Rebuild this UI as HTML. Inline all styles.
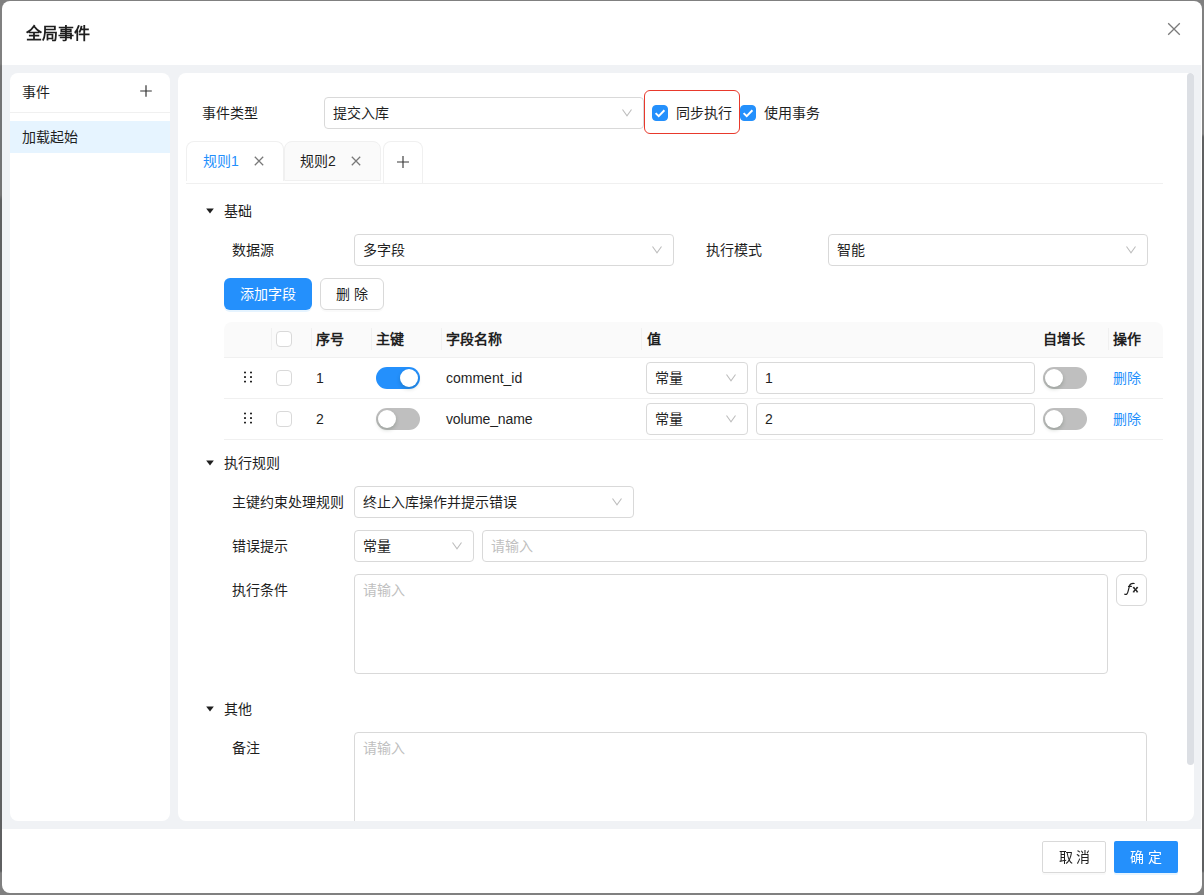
<!DOCTYPE html>
<html lang="zh-CN">
<head>
<meta charset="utf-8">
<title>全局事件</title>
<style>
*{box-sizing:border-box;margin:0;padding:0}
html,body{width:1204px;height:895px;overflow:hidden}
body{position:relative;background:#808080;font-family:"Liberation Sans",sans-serif;font-size:14px;color:#1f1f1f;line-height:22px}
.abs{position:absolute}
.t{position:absolute;white-space:nowrap;height:22px;line-height:22px}
.b{font-weight:700}
/* backdrop details */
#edgeL{left:0;top:0;width:2px;height:895px;background:linear-gradient(#808080 0,#808080 64px,#747474 66px,#747474 195px,#5f6061 200px,#5f6061 871px,#808080 873px)}
#edgeR{left:1202px;top:0;width:2px;height:895px;background:linear-gradient(#808080 0,#808080 134px,#5f6061 137px,#5f6061 871px,#808080 873px)}
/* dialog */
#dlg{left:2px;top:1px;width:1200px;height:892px;background:#fff;border-radius:8px;overflow:hidden}
#gray{left:0;top:64px;width:1199px;height:764px;background:#f0f2f5}
.panel{background:#fff;border-radius:8px;overflow:hidden}
#lp{left:8px;top:72px;width:160px;height:748px}
#rp{left:176px;top:72px;width:1016px;height:748px;border-radius:8px 3px 8px 8px}
/* generic controls */
.box{position:absolute;border:1px solid #d9d9d9;border-radius:4px;background:#fff;height:32px}
.box .v{position:absolute;left:8px;top:4px;height:22px;line-height:22px;white-space:nowrap}
.ph{color:#bfbfbf}
.arr{position:absolute;top:9px;width:12px;height:12px}
.gs{will-change:transform}
.btn{position:absolute;height:32px;border-radius:6px;text-align:center;line-height:30px;white-space:nowrap}
.btn.def{border:1px solid #d9d9d9;background:#fff;box-shadow:0 2px 0 rgba(0,0,0,.02)}
.btn.pri{background:#2490fc;color:#fff;line-height:32px;box-shadow:0 2px 0 rgba(5,145,255,.1)}
.cb{position:absolute;width:16px;height:16px;border-radius:4px;border:1px solid #d9d9d9;background:#fff}
.cb.on{background:#2490fc;border-color:#2490fc}
.sw{position:absolute;width:44px;height:22px;border-radius:11px;background:#bfbfbf}
.sw i{position:absolute;left:2px;top:2px;width:18px;height:18px;border-radius:9px;background:#fff;box-shadow:0 2px 4px rgba(0,35,11,.2)}
.sw.on{background:#2490fc}
.sw.on i{left:24px}
.link{color:#2490fc}
.hl{position:absolute;height:1px;background:#f0f0f0}
.vl{position:absolute;width:1px;background:#f0f0f0}
</style>
</head>
<body>
<div class="abs" id="edgeL"></div>
<div class="abs" id="edgeR"></div>
<div class="abs" id="dlg">
  <!-- header -->
  <div class="t b gs" style="left:24px;top:21px;font-size:16px;height:24px;line-height:24px">全局事件</div>
  <svg class="abs" style="left:1164px;top:20px" width="16" height="16" viewBox="0 0 16 16"><path d="M2.2 2.2 L13.8 13.8 M13.8 2.2 L2.2 13.8" stroke="#7a7a7a" stroke-width="1.3" fill="none"/></svg>
  <div class="abs" id="gray"></div>

  <!-- left panel -->
  <div class="abs panel" id="lp">
    <div class="t" style="left:12px;top:8px">事件</div>
    <svg class="abs" style="left:129px;top:11px" width="14" height="14" viewBox="0 0 14 14"><path d="M7 1.2V12.8M1.2 7H12.8" stroke="#333" stroke-width="1.2" fill="none"/></svg>
    <div class="hl" style="left:0;top:39px;width:160px"></div>
    <div class="abs" style="left:0;top:48px;width:160px;height:32px;background:#e6f4ff"></div>
    <div class="t" style="left:12px;top:53px">加载起始</div>
  </div>

  <!-- right panel -->
  <div class="abs panel" id="rp">
<!--RPSTART-->
    <!-- row: event type -->
    <div class="t" style="left:24px;top:29px">事件类型</div>
    <div class="box" style="left:146px;top:24px;width:320px"><span class="v">提交入库</span><svg class="arr" style="right:10px" viewBox="0 0 12 12"><path d="M1.5 2.5 L6 8.7 L10.5 2.5" stroke="#bdbdbd" stroke-width="1.1" fill="none"/></svg></div>
    <div class="abs" style="left:466px;top:17px;width:96px;height:44px;border:1px solid #e8392c;border-radius:6px"></div>
    <div class="cb on" style="left:474px;top:32px"><svg width="16" height="16" viewBox="0 0 16 16" style="position:absolute;left:-1px;top:-1px"><path d="M3.6 8.1 L6.7 11.1 L12.4 5.3" stroke="#fff" stroke-width="2" fill="none"/></svg></div>
    <div class="t" style="left:498px;top:29px">同步执行</div>
    <div class="cb on" style="left:562px;top:32px"><svg width="16" height="16" viewBox="0 0 16 16" style="position:absolute;left:-1px;top:-1px"><path d="M3.6 8.1 L6.7 11.1 L12.4 5.3" stroke="#fff" stroke-width="2" fill="none"/></svg></div>
    <div class="t" style="left:586px;top:29px">使用事务</div>

    <!-- tabs -->
    <div class="hl" style="left:8px;top:110px;width:977px"></div>
    <div class="abs" style="left:8px;top:68px;width:98px;height:40px;border:1px solid #f0f0f0;border-bottom:0;border-radius:8px 8px 0 0;background:#fff"></div>
    <div class="t link" style="left:25px;top:77px">规则1</div>
    <svg class="abs" style="left:75px;top:82px" width="12" height="12" viewBox="0 0 12 12"><path d="M1.8 1.8 L10.2 10.2 M10.2 1.8 L1.8 10.2" stroke="#787878" stroke-width="1.25" fill="none"/></svg>
    <div class="abs" style="left:106px;top:68px;width:97px;height:40px;border:1px solid #f0f0f0;border-radius:8px 8px 0 0;background:#fafafa"></div>
    <div class="t" style="left:122px;top:77px">规则2</div>
    <svg class="abs" style="left:172px;top:82px" width="12" height="12" viewBox="0 0 12 12"><path d="M1.8 1.8 L10.2 10.2 M10.2 1.8 L1.8 10.2" stroke="#787878" stroke-width="1.25" fill="none"/></svg>
    <div class="abs" style="left:205px;top:68px;width:40px;height:42px;border:1px solid #f0f0f0;border-bottom:0;border-radius:8px 8px 0 0;background:#fff"></div>
    <svg class="abs" style="left:218px;top:82px" width="14" height="14" viewBox="0 0 14 14"><path d="M7 1V13M1 7H13" stroke="#3a3a3a" stroke-width="1.15" fill="none"/></svg>

    <!-- section: basic -->
    <svg class="abs" style="left:28px;top:135px" width="9" height="6" viewBox="0 0 9 6"><path d="M0.2 0.6H7.8L4 5.4Z" fill="#1f1f1f"/></svg>
    <div class="t" style="left:46px;top:127px">基础</div>
    <div class="t" style="left:54px;top:166px">数据源</div>
    <div class="box" style="left:176px;top:161px;width:320px"><span class="v">多字段</span><svg class="arr" style="right:10px" viewBox="0 0 12 12"><path d="M1.5 2.5 L6 8.7 L10.5 2.5" stroke="#bdbdbd" stroke-width="1.1" fill="none"/></svg></div>
    <div class="t" style="left:528px;top:166px">执行模式</div>
    <div class="box" style="left:650px;top:161px;width:320px"><span class="v">智能</span><svg class="arr" style="right:10px" viewBox="0 0 12 12"><path d="M1.5 2.5 L6 8.7 L10.5 2.5" stroke="#bdbdbd" stroke-width="1.1" fill="none"/></svg></div>
    <div class="btn pri" style="left:46px;top:205px;width:88px">添加字段</div>
    <div class="btn def" style="left:142px;top:205px;width:64px">删 除</div>

    <!-- table -->
    <div class="abs" style="left:46px;top:249px;width:939px;height:35px;background:#fafafa;border-radius:8px 8px 0 0"></div>
    <div class="hl" style="left:46px;top:284px;width:939px"></div>
    <div class="hl" style="left:46px;top:325px;width:939px"></div>
    <div class="hl" style="left:46px;top:366px;width:939px"></div>
    <div class="vl" style="left:93px;top:255px;height:22px"></div>
    <div class="vl" style="left:133px;top:255px;height:22px"></div>
    <div class="vl" style="left:193px;top:255px;height:22px"></div>
    <div class="vl" style="left:263px;top:255px;height:22px"></div>
    <div class="vl" style="left:463px;top:255px;height:22px"></div>
    <div class="vl" style="left:930px;top:255px;height:22px"></div>
    <div class="cb" style="left:98px;top:258px"></div>
    <div class="t b" style="left:138px;top:255px">序号</div>
    <div class="t b" style="left:198px;top:255px">主键</div>
    <div class="t b" style="left:268px;top:255px">字段名称</div>
    <div class="t b" style="left:469px;top:255px">值</div>
    <div class="t b" style="left:865px;top:255px">自增长</div>
    <div class="t b" style="left:935px;top:255px">操作</div>
    <!-- row 1 -->
    <svg class="abs" style="left:65px;top:298px" width="10" height="13" viewBox="0 0 10 13"><g fill="#222"><rect x="1" y="0.7" width="2" height="1.6"/><rect x="7" y="0.7" width="2" height="1.6"/><rect x="1" y="5.2" width="2" height="1.7"/><rect x="7" y="5.2" width="2" height="1.7"/><rect x="1" y="9.8" width="2" height="1.6"/><rect x="7" y="9.8" width="2" height="1.6"/></g></svg>
    <div class="cb" style="left:98px;top:297px"></div>
    <div class="t" style="left:138px;top:294px">1</div>
    <div class="sw on" style="left:198px;top:294px"><i></i></div>
    <div class="t" style="left:268px;top:294px">comment_id</div>
    <div class="box" style="left:468px;top:289px;width:102px"><span class="v">常量</span><svg class="arr" style="right:10px" viewBox="0 0 12 12"><path d="M1.5 2.5 L6 8.7 L10.5 2.5" stroke="#bdbdbd" stroke-width="1.1" fill="none"/></svg></div>
    <div class="box" style="left:578px;top:289px;width:279px"><span class="v">1</span></div>
    <div class="sw" style="left:865px;top:294px"><i></i></div>
    <div class="t link" style="left:935px;top:294px">删除</div>
    <!-- row 2 -->
    <svg class="abs" style="left:65px;top:339px" width="10" height="13" viewBox="0 0 10 13"><g fill="#222"><rect x="1" y="0.7" width="2" height="1.6"/><rect x="7" y="0.7" width="2" height="1.6"/><rect x="1" y="5.2" width="2" height="1.7"/><rect x="7" y="5.2" width="2" height="1.7"/><rect x="1" y="9.8" width="2" height="1.6"/><rect x="7" y="9.8" width="2" height="1.6"/></g></svg>
    <div class="cb" style="left:98px;top:338px"></div>
    <div class="t" style="left:138px;top:335px">2</div>
    <div class="sw" style="left:198px;top:335px"><i></i></div>
    <div class="t" style="left:268px;top:335px;letter-spacing:-0.15px">volume_name</div>
    <div class="box" style="left:468px;top:330px;width:102px"><span class="v">常量</span><svg class="arr" style="right:10px" viewBox="0 0 12 12"><path d="M1.5 2.5 L6 8.7 L10.5 2.5" stroke="#bdbdbd" stroke-width="1.1" fill="none"/></svg></div>
    <div class="box" style="left:578px;top:330px;width:279px"><span class="v">2</span></div>
    <div class="sw" style="left:865px;top:335px"><i></i></div>
    <div class="t link" style="left:935px;top:335px">删除</div>

    <!-- section: rules -->
    <svg class="abs" style="left:28px;top:387px" width="9" height="6" viewBox="0 0 9 6"><path d="M0.2 0.6H7.8L4 5.4Z" fill="#1f1f1f"/></svg>
    <div class="t" style="left:46px;top:379px">执行规则</div>
    <div class="t" style="left:54px;top:418px">主键约束处理规则</div>
    <div class="box" style="left:176px;top:413px;width:280px"><span class="v">终止入库操作并提示错误</span><svg class="arr" style="right:10px" viewBox="0 0 12 12"><path d="M1.5 2.5 L6 8.7 L10.5 2.5" stroke="#bdbdbd" stroke-width="1.1" fill="none"/></svg></div>
    <div class="t" style="left:54px;top:462px">错误提示</div>
    <div class="box" style="left:176px;top:457px;width:120px"><span class="v">常量</span><svg class="arr" style="right:10px" viewBox="0 0 12 12"><path d="M1.5 2.5 L6 8.7 L10.5 2.5" stroke="#bdbdbd" stroke-width="1.1" fill="none"/></svg></div>
    <div class="box" style="left:304px;top:457px;width:665px"><span class="v ph">请输入</span></div>
    <div class="t" style="left:54px;top:506px">执行条件</div>
    <div class="box" style="left:176px;top:501px;width:754px;height:100px"><span class="v ph">请输入</span></div>
    <div class="box" style="left:938px;top:501px;width:31px;border-radius:6px"><svg style="position:absolute;left:0;top:0" width="29" height="30" viewBox="0 0 29 30"><g fill="none" stroke="#1f1f1f" stroke-linecap="round"><path d="M7.7 19.2 C9.6 19.9 10.5 18.7 11 16.6 L12.5 10.8 C13.1 8.7 14.4 8.2 17.2 8.5" stroke-width="1.15"/><path d="M11.5 11.4 H14.4" stroke-width="1.1"/><path d="M16.4 12.6 L20.5 16.7 M20.5 12.6 L16.4 16.7" stroke-width="1.35" stroke-linecap="butt"/><path d="M15.8 12.4 H17.7 M19.3 12.4 H21.1 M15.8 16.9 H17.7 M19.3 16.9 H21.1" stroke-width="0.9" stroke-linecap="butt"/></g></svg></div>

    <!-- section: other -->
    <svg class="abs" style="left:28px;top:633px" width="9" height="6" viewBox="0 0 9 6"><path d="M0.2 0.6H7.8L4 5.4Z" fill="#1f1f1f"/></svg>
    <div class="t" style="left:46px;top:625px">其他</div>
    <div class="t" style="left:54px;top:664px">备注</div>
    <div class="box" style="left:176px;top:659px;width:793px;height:100px"><span class="v ph">请输入</span></div>

    <!-- scrollbar thumb -->
    <div class="abs" style="left:1009px;top:0;width:7px;height:692px;border-radius:3.5px;background:#dcdfe4"></div>
<!--RPEND-->
  </div>

  <!-- footer -->
  <div class="btn def gs" style="left:1040px;top:840px;width:64px;border-radius:2px;text-indent:1px">取 消</div>
  <div class="btn pri gs" style="left:1112px;top:840px;width:64px;border-radius:2px">确 定</div>
</div>
</body>
</html>
